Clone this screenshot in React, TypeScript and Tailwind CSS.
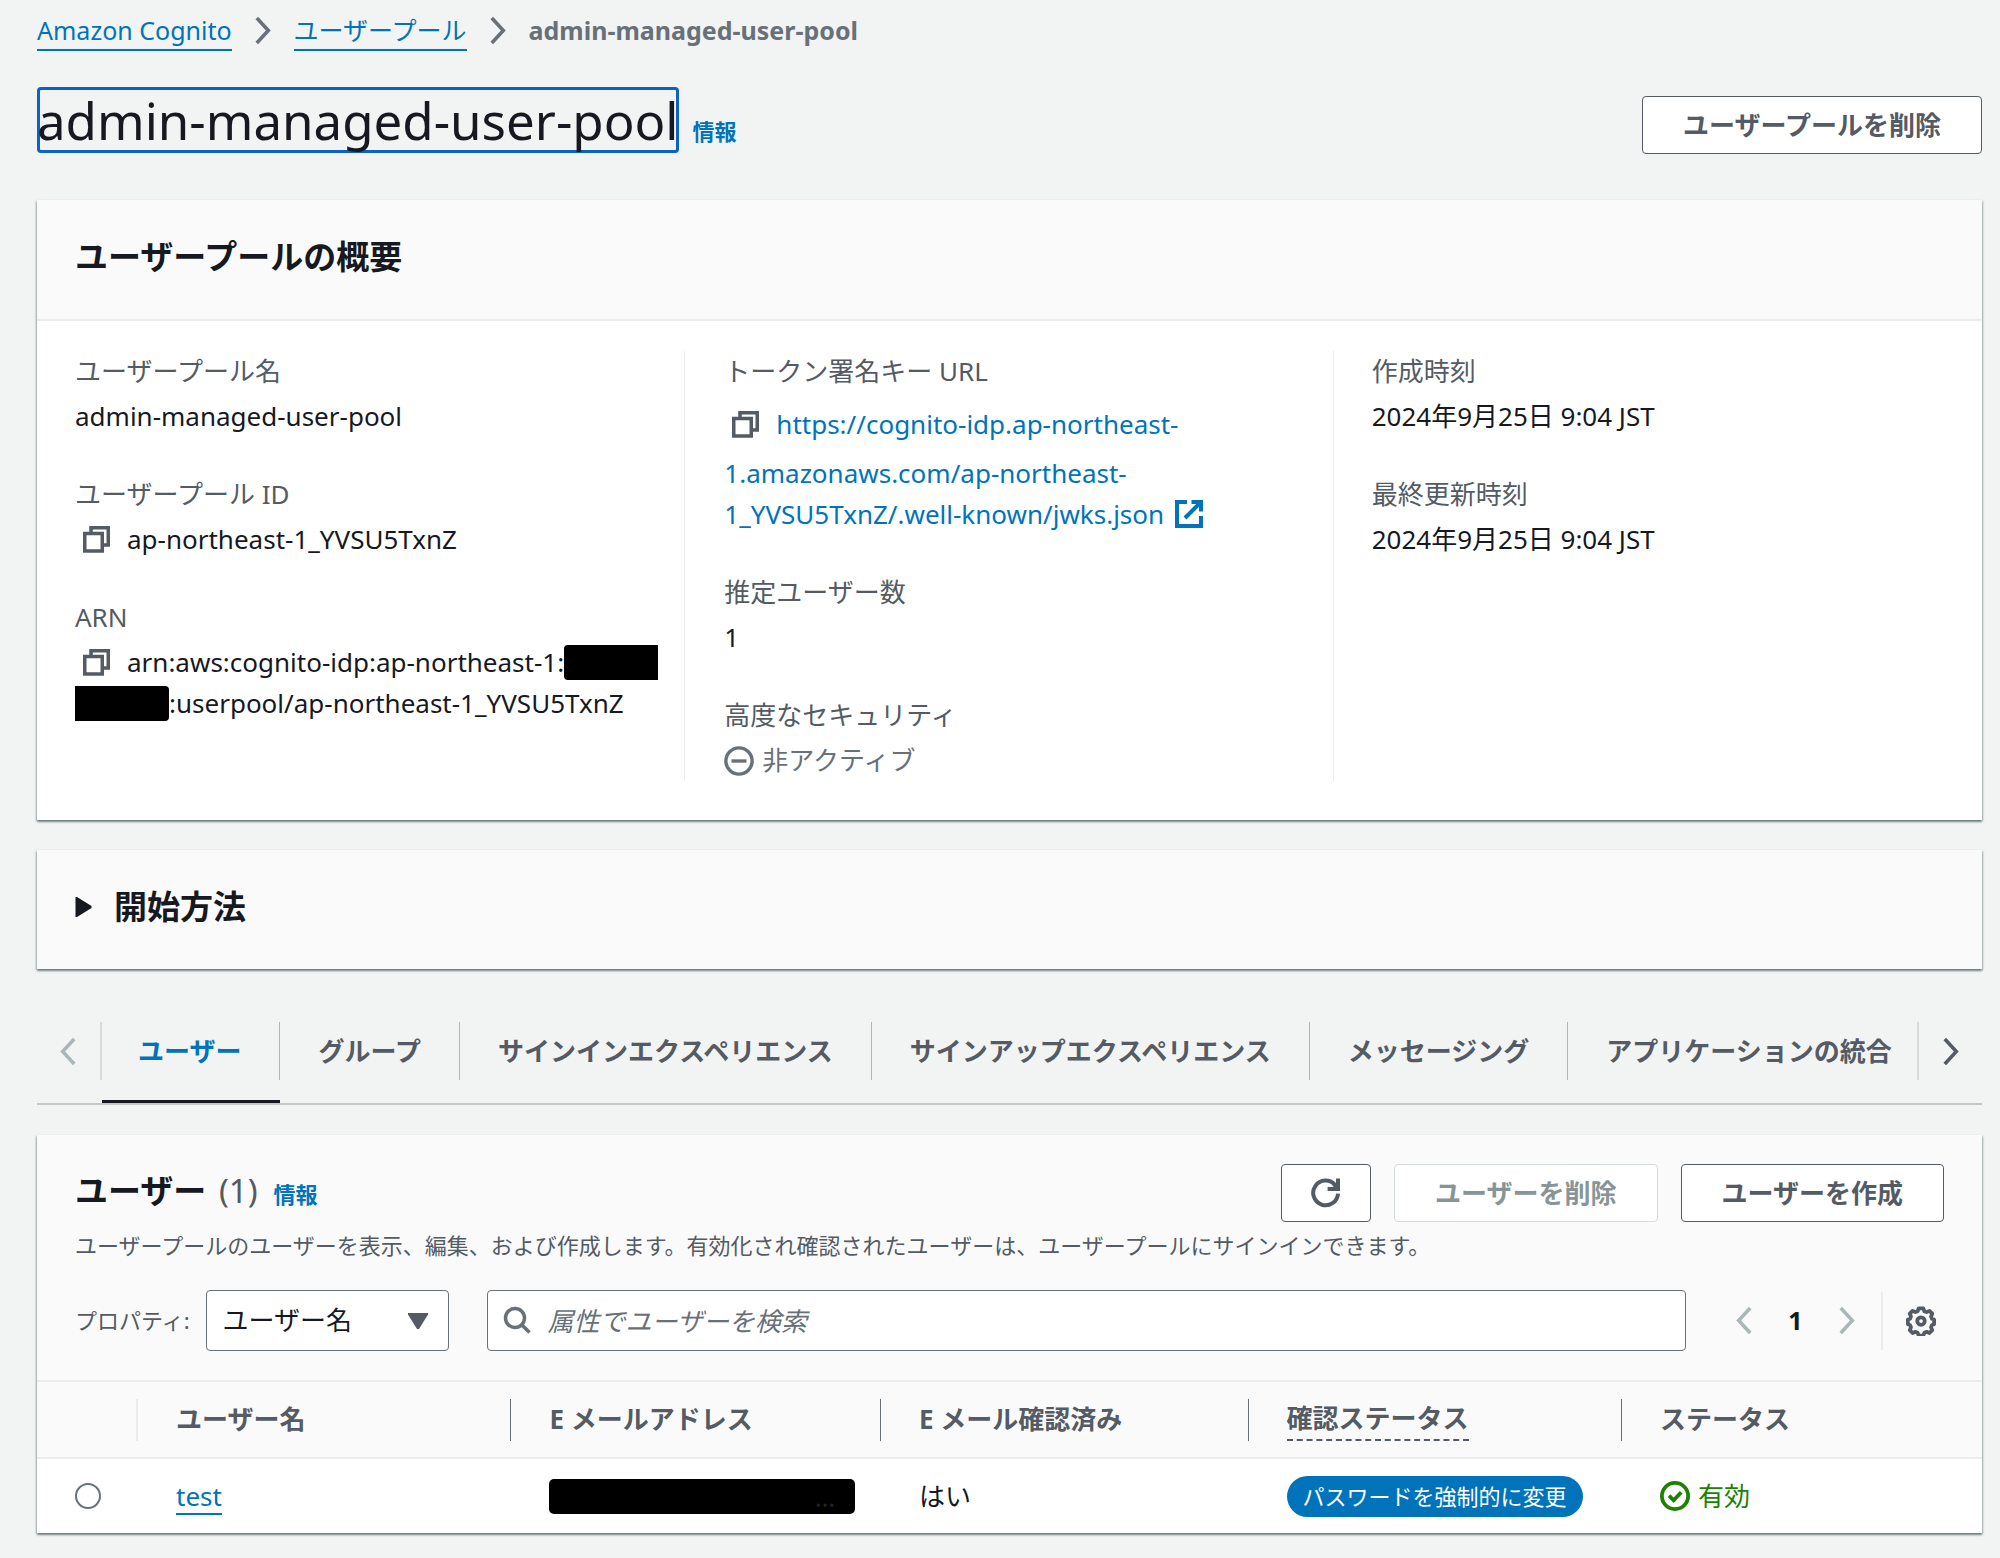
import React from "react";

const LINK = "text-[#0073bb]";

function CopyIcon() {
  return (
    <svg viewBox="0 0 27 27" className="size-[27px]" fill="none" stroke="currentColor" strokeWidth="3.5" aria-hidden="true">
      <path d="M1.750 7.500h17.500v17.500h-17.500z" />
      <path d="M8 7V1.750h17.250v17.250H20" />
    </svg>
  );
}

function ExternalIcon() {
  return (
    <svg viewBox="0 0 28 28" className="ml-1 inline-block size-7 align-[-4px]" fill="none" stroke="currentColor" strokeWidth="4" aria-hidden="true">
      <path d="M26 16v10H2V2h10" />
      <path d="M16.500 2H26v9.500" />
      <path d="M10 18L26 2" />
    </svg>
  );
}

function Chevron({ dir, className }: { dir: "left" | "right"; className: string }) {
  return (
    <svg viewBox="0 0 18 32" className={className} fill="none" stroke="currentColor" strokeWidth="4" aria-hidden="true">
      {dir === "left" ? <path d="M16 2L3 16l13 14" /> : <path d="M2 2l13 14L2 30" />}
    </svg>
  );
}

function InactiveIcon() {
  return (
    <svg viewBox="0 0 16 16" className="size-[30px]" fill="none" stroke="currentColor" strokeWidth="1.8" aria-hidden="true">
      <circle cx="8" cy="8" r="7" />
      <path d="M4 8h8" />
    </svg>
  );
}

function CheckIcon() {
  return (
    <svg viewBox="0 0 16 16" className="size-[30px]" fill="none" stroke="currentColor" strokeWidth="2" aria-hidden="true">
      <circle cx="8" cy="8" r="7" />
      <path d="M4.800 7.800l2.500 2.500L11.300 6" />
    </svg>
  );
}

function RefreshIcon() {
  return (
    <svg viewBox="0 0 16 16" className="size-8" fill="none" stroke="currentColor" strokeWidth="2" aria-hidden="true">
      <path d="M14 8.300A6.200 6.200 0 1 1 12.600 4" />
      <path d="M14 .8V6H8.800" />
      <path d="M12 3.600L14 6" />
    </svg>
  );
}

function GearIcon() {
  return (
    <svg viewBox="0 0 32 32" className="size-[30px]" fill="none" stroke="currentColor" aria-hidden="true">
      <path
        strokeWidth="4"
        strokeLinejoin="round"
        d="M13.500 2.500h5l1 3 2.500 1 3-1.300 3 3-1.300 3 1 2.500 2.300.8v5l-2.300.8-1 2.500 1.300 3-3 3-3-1.300-2.500 1-1 3h-5l-1-3-2.500-1-3 1.300-3-3 1.300-3-1-2.500-2.300-.8v-5l2.300-.8 1-2.500-1.300-3 3-3 3 1.300 2.500-1z"
      />
      <circle cx="16" cy="16" r="4" strokeWidth="4" />
    </svg>
  );
}

function Button({ children, disabled, label }: { children: React.ReactNode; disabled?: boolean; label?: string }) {
  return (
    <button
      type="button"
      disabled={disabled}
      aria-label={label}
      className="flex h-[58px] items-center rounded-[4px] border border-[#545b64] bg-white px-10 font-bold text-[#545b64] disabled:border-[#d5dbdb] disabled:text-[#879596] has-[svg]:px-7"
    >
      {children}
    </button>
  );
}

function Card({ children }: { children: React.ReactNode }) {
  return (
    <section className="bg-white shadow-[0_2px_2px_0_rgba(0,28,36,0.4),1px_1px_2px_0_rgba(0,28,36,0.2),-1px_1px_2px_0_rgba(0,28,36,0.2)]">
      {children}
    </section>
  );
}

function Field({ label, children }: { label: string; children: React.ReactNode }) {
  return (
    <div>
      <dt className="mb-1 text-[#545b64]">{label}</dt>
      <dd>{children}</dd>
    </div>
  );
}

function CopyButton({ tall }: { tall?: boolean }) {
  return (
    <button
      type="button"
      aria-label="コピー"
      className={
        "mr-[17px] ml-2 inline-flex items-center align-[-4px] text-[#545b64] " + (tall ? "h-[57px]" : "h-7")
      }
    >
      <CopyIcon />
    </button>
  );
}

const tabs = [
  "ユーザー",
  "グループ",
  "サインインエクスペリエンス",
  "サインアップエクスペリエンス",
  "メッセージング",
  "アプリケーションの統合",
];

function HeadCell({ children, last }: { children: React.ReactNode; last?: boolean }) {
  return (
    <th scope="col" className="p-0 text-left font-bold">
      <div className={"flex h-[42px] items-center pl-[38px] " + (last ? "" : "border-r border-[#687078]")}>
        {children}
      </div>
    </th>
  );
}

export default function App() {
  return (
    <div
      lang="ja"
      className="min-h-screen bg-[#f2f3f3] pt-[10px] pr-[18px] pb-6 pl-[37px] font-['Noto_Sans','Noto_Sans_CJK_JP',sans-serif] text-[26px] leading-[41px] text-[#16191f]"
    >
      <nav aria-label="パンくずリスト">
        <ol className="flex items-center gap-[23px] text-[25px]">
          <li>
            <a href="#cognito" className={"block border-b-2 border-[#0073bb] leading-[38px] " + LINK}>Amazon Cognito</a>
          </li>
          <li className="flex items-center gap-[23px]">
            <Chevron dir="right" className="h-[29px] w-4 text-[#687078]" />
            <a href="#pools" className={"block border-b-2 border-[#0073bb] leading-[38px] " + LINK}>ユーザープール</a>
          </li>
          <li className="flex items-center gap-[23px] font-bold text-[#687078]">
            <Chevron dir="right" className="h-[29px] w-4" />
            admin-managed-user-pool
          </li>
        </ol>
      </nav>

      <header className="mt-9 flex items-start justify-between">
        <div className="flex items-baseline gap-3.5">
          <h1 className="rounded-[4px] text-[51px] leading-[66px] ring-[3px] ring-[#0a63c9] ring-inset">
            admin-managed-user-pool
          </h1>
          <a href="#info" className={"text-[22px] font-bold " + LINK}>情報</a>
        </div>
        <div className="pt-[9px]">
          <Button>ユーザープールを削除</Button>
        </div>
      </header>

      <main className="mt-[46px] flex flex-col gap-[30px]">
        <Card>
          <div className="border-b-2 border-[#eaeded] bg-[#fafafa] px-[38px] pt-[33px] pb-[39px]">
            <h2 className="text-[33px] leading-[47px] font-bold">ユーザープールの概要</h2>
          </div>
          <div className="grid grid-cols-3 pt-[30px] pb-[39px]">
            <dl className="flex flex-col gap-[37px] border-r border-[#eaeded] pr-4 pl-[38px]">
              <Field label="ユーザープール名">admin-managed-user-pool</Field>
              <Field label="ユーザープール ID">
                <CopyButton />ap-northeast-1_YVSU5TxnZ
              </Field>
              <Field label="ARN">
                <CopyButton />arn:aws:cognito-idp:ap-northeast-1:
                <span className="inline-block h-[35px] w-[94px] rounded-l-[4px] bg-black align-[-8px]" />
                <br />
                <span className="inline-block h-[35px] w-[94px] rounded-r-[4px] bg-black align-[-8px]" />
                :userpool/ap-northeast-1_YVSU5TxnZ
              </Field>
            </dl>
            <dl className="flex flex-col gap-[37px] border-r border-[#eaeded] px-[39px]">
              <Field label="トークン署名キー URL">
                <CopyButton tall />
                <a href="#jwks" className={LINK}>
                  https://cognito-idp.ap-northeast-
                  <br />
                  1.amazonaws.com/ap-northeast-
                  <br />
                  1_YVSU5TxnZ/.well-known/jwks.json <ExternalIcon />
                </a>
              </Field>
              <Field label="推定ユーザー数">1</Field>
              <Field label="高度なセキュリティ">
                <span className="flex items-center gap-2 text-[#687078]">
                  <InactiveIcon />
                  非アクティブ
                </span>
              </Field>
            </dl>
            <dl className="flex flex-col gap-[37px] px-[38px]">
              <Field label="作成時刻">2024年9月25日 9:04 JST</Field>
              <Field label="最終更新時刻">2024年9月25日 9:04 JST</Field>
            </dl>
          </div>
        </Card>

        <Card>
          <h2 className="bg-[#fafafa] text-[33px] leading-[47px] font-bold">
            <button type="button" aria-expanded="false" className="flex w-full items-center gap-[22px] px-[38px] pt-[33px] pb-[39px]">
              <svg viewBox="0 0 16 20" className="h-5 w-[17px]" fill="currentColor" aria-hidden="true">
                <path d="M1.500 0L16 9v2L1.500 20H0V0z" />
              </svg>
              開始方法
            </button>
          </h2>
        </Card>

        <div className="mt-[23px] flex h-[83px] items-start border-b-2 border-[#c3c8c9]">
          <button type="button" disabled aria-label="前のタブ" className="flex h-[58px] w-[65px] shrink-0 items-center justify-end border-r-2 border-[#d5dbdb] pr-6 text-[#aab7b8]">
            <Chevron dir="left" className="h-[29px] w-4" />
          </button>
          <div role="tablist" className="flex min-w-0 flex-1 overflow-hidden">
            {tabs.map((t, i) => (
              <button
                key={t}
                type="button"
                role="tab"
                aria-selected={i === 0}
                className="group flex h-[81px] shrink-0 items-start border-b-[3px] border-transparent font-bold text-[#545b64] aria-selected:border-[#16191f] aria-selected:text-[#0073bb]"
              >
                <span className="flex h-[58px] items-center border-r border-[#aab7b8] px-[38px] group-first:pl-9 group-last:border-transparent">{t}</span>
              </button>
            ))}
          </div>
          <button type="button" aria-label="次のタブ" className="flex h-[58px] w-[65px] shrink-0 items-center justify-start border-l-2 border-[#d5dbdb] pl-6 text-[#545b64]">
            <Chevron dir="right" className="h-[29px] w-4" />
          </button>
        </div>

        <Card>
          <div className="bg-[#fafafa] px-[38px] pt-[29px] pb-[29px]">
            <div className="flex items-start justify-between">
              <div className="flex items-baseline gap-4 pt-[3px]">
                <h2 className="text-[33px] leading-[47px] font-bold">
                  ユーザー <span className="ml-1 font-normal text-[#545b64]">(1)</span>
                </h2>
                <a href="#users-info" className={"text-[22px] font-bold " + LINK}>情報</a>
              </div>
              <div className="flex gap-[23px]">
                <Button label="更新">
                  <RefreshIcon />
                </Button>
                <Button disabled>ユーザーを削除</Button>
                <Button>ユーザーを作成</Button>
              </div>
            </div>
            <p className="mt-[5px] text-[22px] leading-[37px] text-[#545b64]">
              ユーザープールのユーザーを表示、編集、および作成します。有効化され確認されたユーザーは、ユーザープールにサインインできます。
            </p>
            <div className="mt-[26px] flex items-center">
              <label htmlFor="prop" className="mr-4 text-[22px] text-[#545b64]">プロパティ:</label>
              <div className="relative mr-[38px]">
                <select id="prop" className="block h-[61px] w-[243px] appearance-none rounded-[4px] border border-[#687078] bg-white pl-4">
                  <option>ユーザー名</option>
                </select>
                <svg viewBox="0 0 20 16" className="pointer-events-none absolute top-[23px] right-[21px] h-4 w-5 text-[#545b64]" fill="currentColor" aria-hidden="true">
                  <path d="M0 0h20v1.500L11 16H9L0 1.500z" />
                </svg>
              </div>
              <div className="relative flex-1">
                <svg viewBox="0 0 28 28" className="absolute top-4 left-4 size-7 text-[#687078]" fill="none" stroke="currentColor" strokeWidth="3.500" aria-hidden="true">
                  <circle cx="12" cy="12" r="9.500" />
                  <path d="M18.500 18.500L26.500 26.500" />
                </svg>
                <input
                  type="search"
                  aria-label="属性でユーザーを検索"
                  placeholder="属性でユーザーを検索"
                  className="block h-[61px] w-full rounded-[4px] border border-[#687078] bg-white pl-[60px] placeholder:text-[#687078] placeholder:italic"
                />
              </div>
              <div className="ml-[50px] flex items-center">
                <button type="button" disabled aria-label="前のページ" className="text-[#aab7b8]">
                  <Chevron dir="left" className="h-[29px] w-4" />
                </button>
                <button type="button" aria-current="page" className="w-[87px] text-center text-[25px] font-bold">1</button>
                <button type="button" disabled aria-label="次のページ" className="text-[#aab7b8]">
                  <Chevron dir="right" className="h-[29px] w-4" />
                </button>
              </div>
              <button type="button" aria-label="設定" className="ml-[26px] flex h-[58px] items-center border-l-2 border-[#eaeded] pr-2 pl-[23px] text-[#545b64]">
                <GearIcon />
              </button>
            </div>
          </div>
          <table className="w-full table-fixed border-collapse">
            <colgroup>
              <col className="w-[101px]" />
              <col className="w-[19.200%]" />
              <col className="w-[19%]" />
              <col className="w-[18.900%]" />
              <col className="w-[19.200%]" />
              <col />
            </colgroup>
            <thead>
              <tr className="h-[77px] border-y-2 border-[#eaeded] bg-[#fafafa] text-[#545b64]">
                <td className="p-0">
                  <div className="h-[42px] border-r-2 border-[#eaeded]" />
                </td>
                <HeadCell>ユーザー名</HeadCell>
                <HeadCell>E メールアドレス</HeadCell>
                <HeadCell>E メール確認済み</HeadCell>
                <HeadCell>
                  <span className="border-b-2 border-dashed border-[#545b64]">確認ステータス</span>
                </HeadCell>
                <HeadCell last>ステータス</HeadCell>
              </tr>
            </thead>
            <tbody>
              <tr className="h-[75px]">
                <td className="p-0 pl-[38px]">
                  <input type="radio" name="user" aria-label="test" className="block size-[26px] appearance-none rounded-full border-2 border-[#687078] bg-white" />
                </td>
                <td className="p-0 pl-[38px]">
                  <a href="#test" className={"inline-block border-b-2 border-[#0073bb] leading-[34px] " + LINK}>test</a>
                </td>
                <td className="p-0 pl-[38px]">
                  <div className="h-[35px] w-[306px] rounded-[5px] bg-black pr-5 text-right leading-9 text-[#242424]">…</div>
                </td>
                <td className="p-0 pl-[38px]">はい</td>
                <td className="p-0 pl-[38px]">
                  <span className="block w-fit rounded-full bg-[#0073bb] px-4 text-[22px] leading-[41px] text-white">パスワードを強制的に変更</span>
                </td>
                <td className="p-0 pl-[38px]">
                  <span className="flex items-center gap-2 text-[#1d8102]">
                    <CheckIcon />
                    有効
                  </span>
                </td>
              </tr>
            </tbody>
          </table>
        </Card>
      </main>
    </div>
  );
}
